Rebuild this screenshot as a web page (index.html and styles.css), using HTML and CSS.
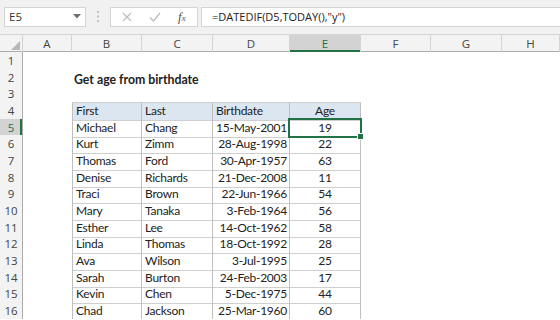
FILE: index.html
```html
<!DOCTYPE html>
<html lang="en">
<head>
    <meta charset="UTF-8">
    <title>Get age from birthdate</title>
    <link rel="stylesheet" href="styles.css">
</head>
<body>
    <div class="formula-bar">
        <div class="name-box">
            <span>E5</span>
            <svg width="8" height="5" viewBox="0 0 8 5"><path d="M0 0h8L4 4.5z" fill="#6d6d6d"/></svg>
        </div>
        <svg class="grip" width="2" height="11" viewBox="0 0 2 11"><rect y="0" width="2" height="2" fill="#c3c3c3"/><rect y="4.5" width="2" height="2" fill="#c3c3c3"/><rect y="9" width="2" height="2" fill="#c3c3c3"/></svg>
        <div class="fx-box">
            <svg width="10" height="10" viewBox="0 0 10 10"><path d="M1 1l8 8M9 1l-8 8" stroke="#bdbdbd" stroke-width="1.2"/></svg>
            <svg width="12" height="10" viewBox="0 0 12 10"><path d="M1 5.5l3.5 3.5L11 1" stroke="#bdbdbd" stroke-width="1.3" fill="none"/></svg>
            <span class="fx">f<small>x</small></span>
        </div>
        <div class="formula">=DATEDIF(D5,TODAY(),"y")</div>
    </div>

    <div class="sheet">
        <div class="row heads">
            <div class="corner"><svg width="9" height="9" viewBox="0 0 9 9"><path d="M9 0v9H0z" fill="#b8b8b8"/></svg></div>
            <div class="ch">A</div>
            <div class="ch">B</div>
            <div class="ch">C</div>
            <div class="ch">D</div>
            <div class="ch active">E</div>
            <div class="ch">F</div>
            <div class="ch">G</div>
            <div class="ch">H</div>
        </div>
        <div class="row"><div class="rh">1</div></div>
        <div class="row"><div class="rh">2</div><div class="title">Get age from birthdate</div></div>
        <div class="row"><div class="rh">3</div></div>
        <div class="row thead">
            <div class="rh">4</div>
            <div class="c first">First</div><div class="c">Last</div><div class="c">Birthdate</div><div class="c mid">Age</div>
        </div>
        <div class="row">
            <div class="rh active">5</div>
            <div class="c first">Michael</div><div class="c">Chang</div><div class="c num">15-May-2001</div><div class="c mid sel">19</div>
        </div>
        <div class="row">
            <div class="rh">6</div>
            <div class="c first">Kurt</div><div class="c">Zimm</div><div class="c num">28-Aug-1998</div><div class="c mid">22</div>
        </div>
        <div class="row">
            <div class="rh">7</div>
            <div class="c first">Thomas</div><div class="c">Ford</div><div class="c num">30-Apr-1957</div><div class="c mid">63</div>
        </div>
        <div class="row">
            <div class="rh">8</div>
            <div class="c first">Denise</div><div class="c">Richards</div><div class="c num">21-Dec-2008</div><div class="c mid">11</div>
        </div>
        <div class="row">
            <div class="rh">9</div>
            <div class="c first">Traci</div><div class="c">Brown</div><div class="c num">22-Jun-1966</div><div class="c mid">54</div>
        </div>
        <div class="row">
            <div class="rh">10</div>
            <div class="c first">Mary</div><div class="c">Tanaka</div><div class="c num">3-Feb-1964</div><div class="c mid">56</div>
        </div>
        <div class="row">
            <div class="rh">11</div>
            <div class="c first">Esther</div><div class="c">Lee</div><div class="c num">14-Oct-1962</div><div class="c mid">58</div>
        </div>
        <div class="row">
            <div class="rh">12</div>
            <div class="c first">Linda</div><div class="c">Thomas</div><div class="c num">18-Oct-1992</div><div class="c mid">28</div>
        </div>
        <div class="row">
            <div class="rh">13</div>
            <div class="c first">Ava</div><div class="c">Wilson</div><div class="c num">3-Jul-1995</div><div class="c mid">25</div>
        </div>
        <div class="row">
            <div class="rh">14</div>
            <div class="c first">Sarah</div><div class="c">Burton</div><div class="c num">24-Feb-2003</div><div class="c mid">17</div>
        </div>
        <div class="row">
            <div class="rh">15</div>
            <div class="c first">Kevin</div><div class="c">Chen</div><div class="c num">5-Dec-1975</div><div class="c mid">44</div>
        </div>
        <div class="row">
            <div class="rh">16</div>
            <div class="c first">Chad</div><div class="c">Jackson</div><div class="c num">25-Mar-1960</div><div class="c mid">60</div>
        </div>
    </div>
</body>
</html>
```

FILE: styles.css
```css
body {
    margin: 0;
    background-color: white;
    font-family: Lato, "Liberation Sans", sans-serif;
    overflow: hidden;
}

/* formula bar */
.formula-bar {
    display: flex;
    align-items: center;
    height: 35px;
    padding-bottom: 1px;
    box-sizing: border-box;
    background-color: #f1f1f1;
    border-bottom: 1px solid #d6d6d6;
}
.name-box {
    display: flex;
    align-items: center;
    justify-content: space-between;
    width: 82px;
    height: 20px;
    margin-left: 4px;
    padding: 0 4px 0 4px;
    box-sizing: border-box;
    background-color: white;
    border: 1px solid #d4d4d4;
    font-family: "Open Sans", sans-serif;
    font-size: 11.5px;
    color: #333;
}
.grip {
    margin: 0 11px 0 11px;
}
.fx-box {
    display: flex;
    align-items: center;
    width: 88px;
    height: 20px;
    padding-left: 11px;
    gap: 17px;
    box-sizing: border-box;
    background-color: white;
    border: 1px solid #d4d4d4;
}
.fx {
    font-family: "Liberation Serif", serif;
    font-style: italic;
    font-size: 13px;
    color: #555;
}
.fx small {
    font-size: 9px;
}
.formula {
    flex: 1;
    height: 20px;
    margin-left: 3px;
    padding-left: 10px;
    box-sizing: border-box;
    background-color: white;
    border: 1px solid #d4d4d4;
    border-right: none;
    font-family: "Open Sans", sans-serif;
    font-size: 11px;
    line-height: 18px;
    color: #222;
}

/* sheet grid */
.row {
    display: grid;
    grid-template-columns: 23px 49px 70px 71px 77px 71px 70px 71px 1fr;
    height: 16.67px;
    font-size: 12px;
    letter-spacing: -0.25px;
    color: #222;
}
.heads {
    height: 17px;
    background-color: #f3f3f3;
    border-bottom: 1px solid #ababab;
    box-sizing: border-box;
    letter-spacing: 0;
}
.corner {
    display: flex;
    align-items: flex-end;
    justify-content: flex-end;
    padding: 0 2px 2px 0;
    border-right: 1px solid #d4d4d4;
}
.ch {
    border-right: 1px solid #d4d4d4;
    text-align: center;
    font-family: "Open Sans", sans-serif;
    font-size: 11.5px;
    line-height: 17px;
    color: #444;
}
.ch.active {
    background-color: #d3d3d3;
    color: #217346;
    box-shadow: inset 0 -2px 0 #217346;
}
.rh {
    background-color: #f3f3f3;
    border-right: 1px solid #ababab;
    border-bottom: 1px solid #d9d9d9;
    box-sizing: border-box;
    text-align: center;
    font-family: "Open Sans", sans-serif;
    font-size: 11.5px;
    line-height: 18px;
    letter-spacing: 0;
    color: #444;
}
.rh.active {
    background-color: #d3d3d3;
    color: #217346;
    box-shadow: inset -2px 0 0 #217346;
}
.title {
    grid-column: 3 / 6;
    padding: 2px 0 0 2px;
    font-weight: bold;
    font-size: 12.3px;
    letter-spacing: 0;
    line-height: 17px;
}

/* data table */
.c {
    padding: 1px 3px 0 3px;
    line-height: 16px;
    white-space: nowrap;
    border-right: 1px solid #bfbfbf;
    border-bottom: 1px solid #cfcfcf;
    box-sizing: border-box;
}
.c.first {
    grid-column: 3;
    border-left: 1px solid #bfbfbf;
}
.num {
    text-align: right;
    padding-right: 2px;
}
.mid {
    text-align: center;
}
.thead .c {
    background-color: #dce6f1;
    border-top: 1px solid #cfcfcf;
    padding-top: 0;
    line-height: 16px;
}
.sel {
    position: relative;
}
.sel::after {
    content: "";
    position: absolute;
    top: -1px;
    left: -2px;
    right: -2px;
    bottom: -1px;
    border: 2px solid #217346;
}
.sel::before {
    content: "";
    position: absolute;
    right: -4px;
    bottom: -3px;
    width: 5px;
    height: 5px;
    background-color: #217346;
    border: 1px solid white;
    z-index: 1;
}
```
